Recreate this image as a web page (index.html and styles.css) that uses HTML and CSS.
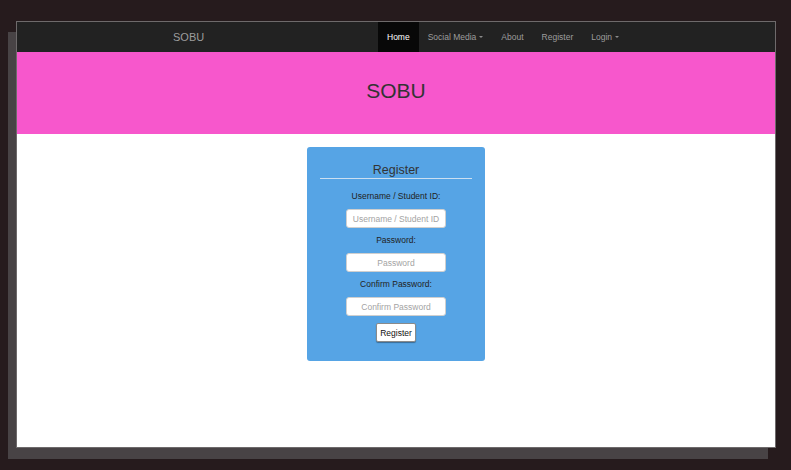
FILE: index.html
```html
<!DOCTYPE html>
<html lang="en">
<head>
<meta charset="utf-8">
<title>SOBU - Register</title>
<link rel="stylesheet" href="styles.css">
</head>
<body>
<div class="window">
  <nav class="navbar">
    <a class="brand" href="#">SOBU</a>
    <ul class="nav">
      <li class="active"><a href="#">Home</a></li>
      <li><a href="#">Social Media <span class="caret"></span></a></li>
      <li><a href="#">About</a></li>
      <li><a href="#">Register</a></li>
      <li><a href="#">Login <span class="caret"></span></a></li>
    </ul>
  </nav>
  <header class="banner">
    <h1 class="banner-title">SOBU</h1>
  </header>
  <main class="content">
    <section class="card">
      <h2 class="card-title">Register</h2>
      <form class="form">
        <label class="label first" for="user">Username / Student ID:</label>
        <input class="field" id="user" type="text" placeholder="Username / Student ID">
        <label class="label" for="pass">Password:</label>
        <input class="field" id="pass" type="password" placeholder="Password">
        <label class="label" for="confirm">Confirm Password:</label>
        <input class="field" id="confirm" type="password" placeholder="Confirm Password">
        <button class="btn" type="button">Register</button>
      </form>
    </section>
  </main>
</div>
</body>
</html>
```
FILE: styles.css
```css
html, body {
  margin: 0;
  padding: 0;
}
body {
  background: #261b1d;
  font-family: "Liberation Sans", Arial, Helvetica, sans-serif;
  width: 791px;
  height: 470px;
  overflow: hidden;
}
.window {
  margin: 21px 0 0 16px;
  width: 760px;
  height: 427px;
  box-sizing: border-box;
  border: 1px solid #6e6a6b;
  background: #fff;
  box-shadow: -8px 11px 0 #484345;
  display: flex;
  flex-direction: column;
}
.navbar {
  height: 30px;
  background: #222;
  display: flex;
  align-items: stretch;
  padding-left: 156px;
}
.brand {
  width: 205px;
  display: flex;
  align-items: center;
  color: #9d9d9d;
  font-size: 11px;
  text-decoration: none;
}
.nav {
  list-style: none;
  margin: 0;
  padding: 0;
  display: flex;
}
.nav li {
  display: flex;
}
.nav a {
  display: flex;
  align-items: center;
  padding: 0 9px;
  color: #9d9d9d;
  font-size: 8.5px;
  text-decoration: none;
}
.nav li.active a {
  background: #080808;
  color: #fff;
}
.caret {
  display: inline-block;
  width: 0;
  height: 0;
  margin-left: 3px;
  border-top: 2px solid #8a8a8a;
  border-left: 2px solid transparent;
  border-right: 2px solid transparent;
}
.banner {
  height: 82px;
  background: #f757cc;
  display: flex;
  justify-content: center;
  align-items: center;
}
.banner-title {
  margin: 0 0 4px 0;
  font-size: 21px;
  font-weight: normal;
  color: #333;
  line-height: 24px;
}
.content {
  flex: 1;
  display: flex;
  justify-content: center;
  align-items: flex-start;
  padding-top: 13px;
}
.card {
  width: 178px;
  box-sizing: border-box;
  background: #56a4e5;
  border-radius: 3px;
  padding: 15px 0 19px;
}
.card-title {
  margin: 0 13px;
  font-size: 12.5px;
  font-weight: normal;
  color: #333;
  line-height: 16px;
  text-align: center;
  border-bottom: 1px solid #cbdff1;
}
.form {
  display: flex;
  flex-direction: column;
  align-items: center;
}
.label {
  margin-top: 6px;
  font-size: 8.5px;
  line-height: 12px;
  color: #222;
}
.label.first {
  margin-top: 11px;
}
.field {
  margin-top: 7px;
  width: 100px;
  height: 19px;
  box-sizing: border-box;
  border: 1px solid #cfcfcf;
  border-radius: 3px;
  background: #fff;
  font-family: "Liberation Sans", Arial, sans-serif;
  font-size: 8.5px;
  text-align: center;
  padding: 0 3px;
  outline: none;
}
.field::placeholder {
  color: #a3a3a3;
}
.btn {
  margin-top: 7px;
  height: 19px;
  padding: 0 3px;
  background: #fff;
  border: 1px solid #8a8a8a;
  border-radius: 2px;
  box-shadow: 0 1px 1px rgba(0,0,0,0.35);
  font-family: "Liberation Sans", Arial, sans-serif;
  font-size: 8.5px;
  color: #111;
}
```
